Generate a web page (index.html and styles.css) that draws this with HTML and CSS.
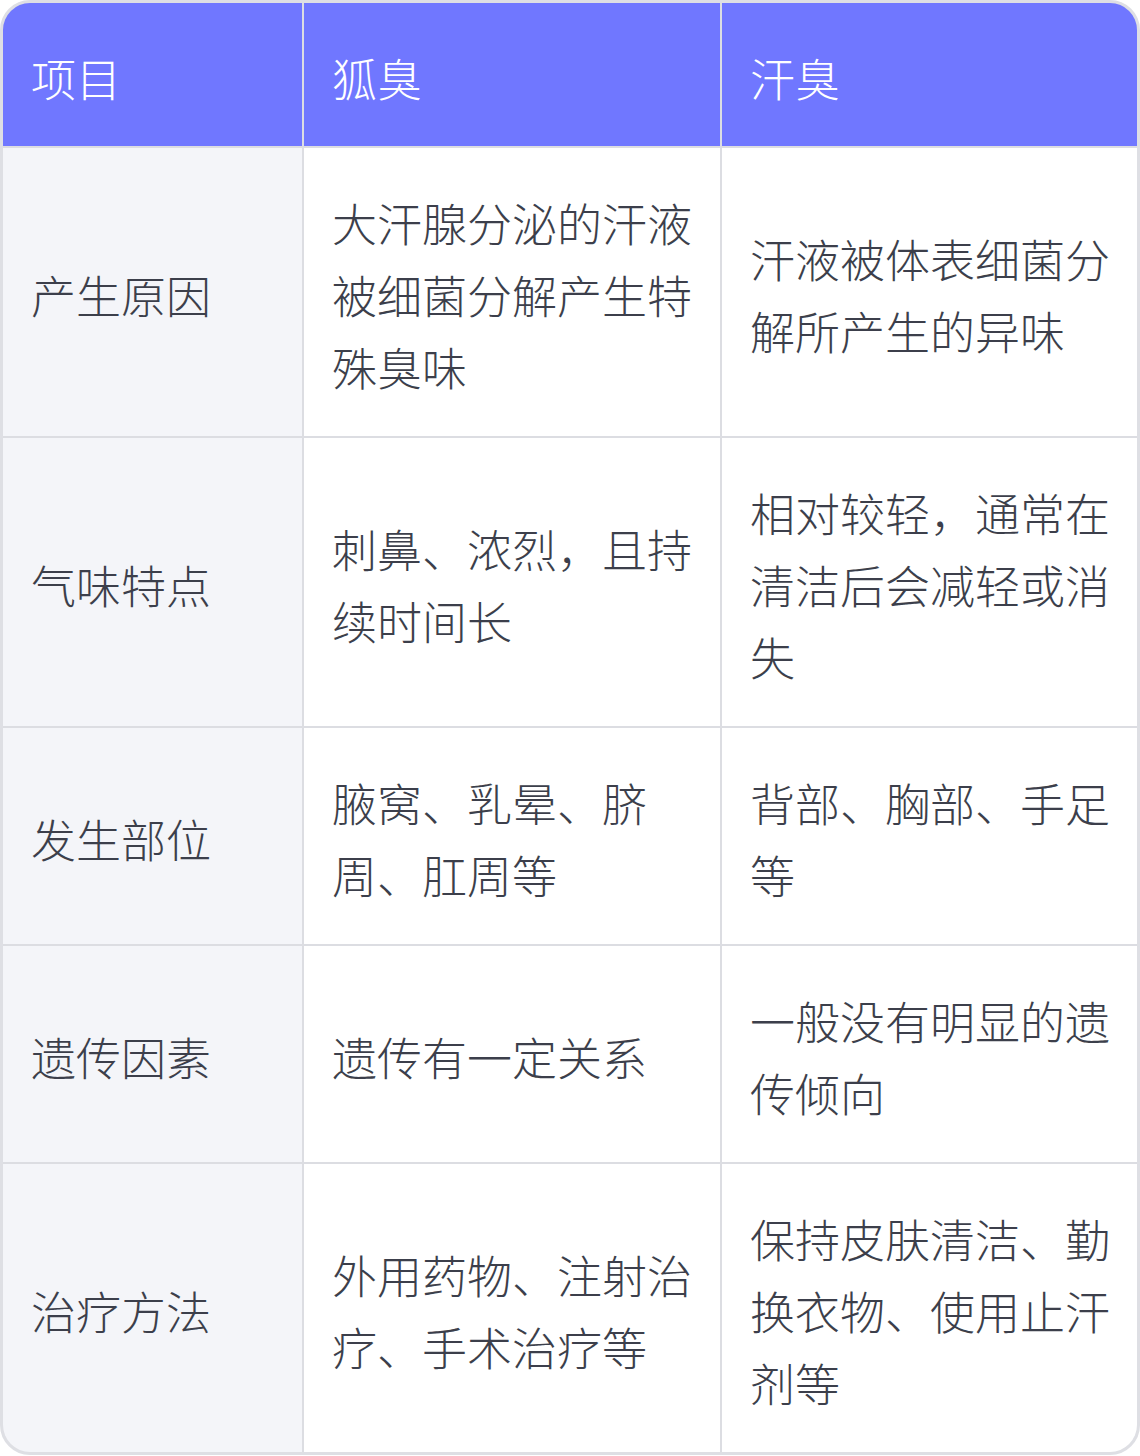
FILE: index.html
```html
<!DOCTYPE html>
<html lang="zh-CN">
<head>
<meta charset="utf-8">
<title>狐臭与汗臭</title>
<link rel="stylesheet" href="styles.css">
</head>
<body>
<div class="table">
  <div class="cell head">项目</div>
  <div class="cell head">狐臭</div>
  <div class="cell head">汗臭</div>

  <div class="cell label">产生原因</div>
  <div class="cell">大汗腺分泌的汗液被细菌分解产生特殊臭味</div>
  <div class="cell">汗液被体表细菌分解所产生的异味</div>

  <div class="cell label">气味特点</div>
  <div class="cell">刺鼻、浓烈，且持续时间长</div>
  <div class="cell">相对较轻，通常在清洁后会减轻或消失</div>

  <div class="cell label">发生部位</div>
  <div class="cell">腋窝、乳晕、脐周、肛周等</div>
  <div class="cell">背部、胸部、手足等</div>

  <div class="cell label">遗传因素</div>
  <div class="cell">遗传有一定关系</div>
  <div class="cell">一般没有明显的遗传倾向</div>

  <div class="cell label">治疗方法</div>
  <div class="cell">外用药物、注射治疗、手术治疗等</div>
  <div class="cell">保持皮肤清洁、勤换衣物、使用止汗剂等</div>
</div>
</body>
</html>
```
FILE: styles.css
```css
html, body {
  margin: 0;
  padding: 0;
  background: #ffffff;
}
body {
  width: 1140px;
  font-family: "Noto Sans CJK SC", "Noto Sans", sans-serif;
}
.table {
  box-sizing: border-box;
  width: 1140px;
  border: 3px solid #dedfe4;
  border-radius: 30px;
  overflow: hidden;
  display: grid;
  grid-template-columns: 299px 416px 1fr;
  gap: 2px;
  background: #dcdde2;
}
.cell {
  background: #ffffff;
  color: #3c3f4b;
  font-size: 45px;
  font-weight: 300;
  line-height: 72px;
  padding: 39px 24px 33px 28px;
  display: flex;
  align-items: center;
}
.head {
  background: #7077ff;
  color: #ffffff;
  padding: 38.5px 24px 32.5px 28px;
}
.label {
  background: #f4f5f9;
}
```
